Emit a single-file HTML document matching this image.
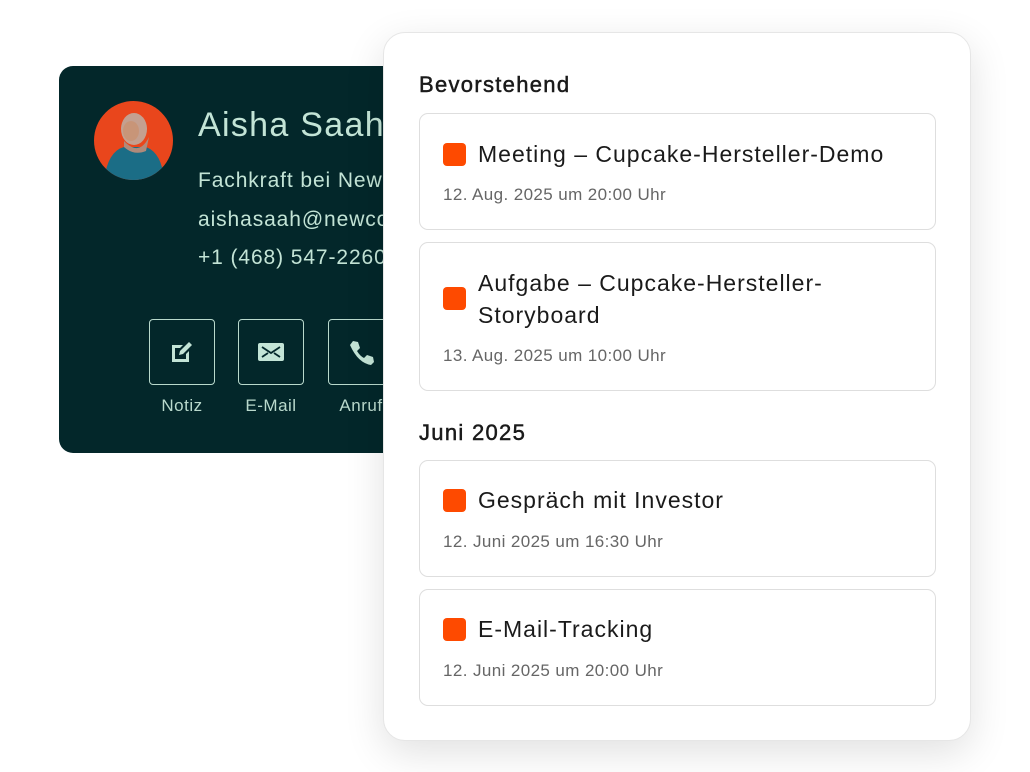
<!DOCTYPE html>
<html><head><meta charset="utf-8"><style>
*{margin:0;padding:0;box-sizing:border-box}
body{width:1030px;height:772px;background:#fff;position:relative;overflow:hidden;font-family:"Liberation Sans",sans-serif}
.dark{position:absolute;left:59px;top:66px;width:400px;height:387px;background:#03272a;border-radius:14px;color:#c3e4d6;overflow:hidden}
.av{position:absolute;left:35px;top:35px;width:79px;height:79px;border-radius:50%;background:#e9461c;overflow:hidden}
.name{position:absolute;left:139px;top:40px;font-size:34px;white-space:nowrap;letter-spacing:1.3px}
.l{position:absolute;left:139px;font-size:21px;white-space:nowrap;letter-spacing:.9px}
.btn{position:absolute;top:253px;width:66px;height:66px;border:1.5px solid #b9d9cc;border-radius:4px;display:flex;align-items:center;justify-content:center}
.bl{position:absolute;top:330px;font-size:17px;width:90px;text-align:center;letter-spacing:.5px;color:#b9d9cc}
.panel{position:absolute;left:383px;top:32px;width:588px;height:709px;background:#fff;border-radius:22px;border:1px solid #e6e6e6;box-shadow:0 12px 40px rgba(0,0,0,.12)}
h2{position:absolute;left:35px;font-size:22px;font-weight:normal;color:#1a1a1a;-webkit-text-stroke:.5px #1a1a1a;letter-spacing:1.3px}
.c{position:absolute;left:35px;width:517px;border:1px solid #dedede;border-radius:9px}
.sq{position:absolute;left:23px;width:23px;height:23px;background:#fe4a00;border-radius:4px}
.t{position:absolute;left:58px;font-size:23px;color:#1a1a1a;line-height:32px;letter-spacing:1px}
.d{position:absolute;left:23px;font-size:17px;color:#666;letter-spacing:.4px}
</style></head><body>
<div class="dark">
 <div class="av"><svg width="79" height="79" viewBox="0 0 79 79"><ellipse cx="40" cy="28" rx="13" ry="16" fill="#c4a090"/><ellipse cx="37" cy="30" rx="8" ry="10" fill="#c89578"/><path d="M10 79 Q14 50 30 46 L52 46 Q68 52 70 79Z" fill="#1b6d86"/><path d="M30 40 Q45 56 55 36 L52 50 Q40 55 30 46Z" fill="#b08a7a"/></svg></div>
 <div class="name">Aisha Saah</div>
 <div class="l" style="top:103px">Fachkraft bei NewCo</div>
 <div class="l" style="top:142px">aishasaah@newco.com</div>
 <div class="l" style="top:180px">+1 (468) 547-2260</div>
 <div class="btn" style="left:90px"><svg width="24" height="24" viewBox="0 0 24 24"><path d="M2 5h11l-3 3H5v11h11v-5l3-3v11H2z" fill="#c3e4d6"/><path d="M9 15l1-4 9-9 3 3-9 9z" fill="#c3e4d6"/></svg></div>
 <div class="btn" style="left:179px"><svg width="26" height="18" viewBox="0 0 26 18"><rect x="0" y="0" width="26" height="18" rx="2" fill="#c3e4d6"/><path d="M4 4l9 6 9-6M4 14l6-4M22 14l-6-4" stroke="#03272a" stroke-width="1.8" fill="none"/></svg></div>
 <div class="btn" style="left:269px"><svg width="26" height="26" viewBox="0 0 26 26"><path d="M5 2l5 1 2 6-3 3q3 5 7 7l3-3 6 2 1 5-3 3Q10 24 2 6z" fill="#c3e4d6"/></svg></div>
 <div class="bl" style="left:78px">Notiz</div>
 <div class="bl" style="left:167px">E-Mail</div>
 <div class="bl" style="left:257px">Anruf</div>
</div>
<div class="panel">
 <h2 style="top:39px">Bevorstehend</h2>
 <div class="c" style="top:80px;height:117px"><div class="sq" style="top:29px"></div><div class="t" style="top:24px">Meeting – Cupcake-Hersteller-Demo</div><div class="d" style="top:71px">12. Aug. 2025 um 20:00 Uhr</div></div>
 <div class="c" style="top:209px;height:149px"><div class="sq" style="top:44px"></div><div class="t" style="top:24px">Aufgabe – Cupcake-Hersteller-<br>Storyboard</div><div class="d" style="top:103px">13. Aug. 2025 um 10:00 Uhr</div></div>
 <h2 style="top:387px">Juni 2025</h2>
 <div class="c" style="top:427px;height:117px"><div class="sq" style="top:28px"></div><div class="t" style="top:23px">Gespräch mit Investor</div><div class="d" style="top:71px">12. Juni 2025 um 16:30 Uhr</div></div>
 <div class="c" style="top:556px;height:117px"><div class="sq" style="top:28px"></div><div class="t" style="top:23px">E-Mail-Tracking</div><div class="d" style="top:71px">12. Juni 2025 um 20:00 Uhr</div></div>
</div>
</body></html>
